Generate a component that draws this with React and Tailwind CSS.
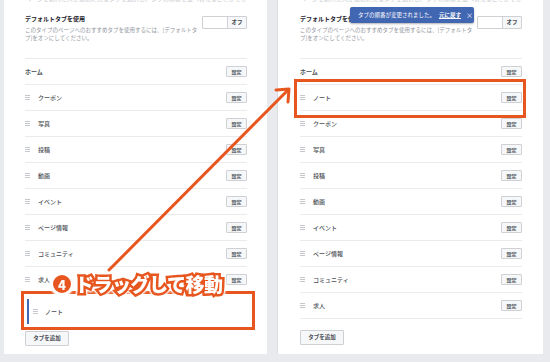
import React from "react";

const TABS = ["クーポン", "写真", "投稿", "動画", "イベント", "ページ情報", "コミュニティ", "求人"];

function Grip() {
  return (
    <div className="flex flex-col gap-[1px] w-[5px] shrink-0">
      <span className="h-[1px] bg-[#c4c7cc]" />
      <span className="h-[1px] bg-[#c4c7cc]" />
      <span className="h-[1px] bg-[#c4c7cc]" />
    </div>
  );
}

function SetButton() {
  return (
    <button className="w-[21px] h-[11px] border border-[#ced0d4] bg-[#f6f7f9] rounded-[1px] text-[5px] font-bold text-[#4b4f56] flex items-center justify-center leading-none">
      設定
    </button>
  );
}

function TabRow({ label }) {
  return (
    <div className="h-[26px] border-b border-[#e9ebee] flex items-center">
      <Grip />
      <span className="ml-[8px] text-[6px] text-[#4b4f56] font-medium">{label}</span>
      <div className="ml-auto">
        <SetButton />
      </div>
    </div>
  );
}

function Header() {
  return (
    <>
      <div className="-mt-[5px] h-[8px] text-[6px] text-[#c9ccd1] leading-[8px] overflow-hidden whitespace-nowrap">
        ページを訪れた人が最初に見るタブを選択し、タブの順番を並べ替えることができます。
      </div>
      <div className="flex justify-between pt-[12px] h-[56px] border-b border-[#e9ebee]">
        <div>
          <div className="text-[6px] leading-[8px] font-bold text-[#1d2129]">デフォルトタブを使用</div>
          <div className="mt-[3px] text-[5.5px] leading-[8px] text-[#90949c] w-[176px]">
            このタイプのページへのおすすめタブを使用するには、[デフォルトタブ]をオンにしてください。
          </div>
        </div>
        <div className="mt-[1px] w-[45px] h-[13px] border border-[#ced0d4] rounded-[1px] flex">
          <div className="w-[24px] bg-white" />
          <div className="flex-1 bg-[#f6f7f9] border-l border-[#ced0d4] flex items-center justify-center text-[5.5px] font-bold text-[#4b4f56]">
            オフ
          </div>
        </div>
      </div>
      <div className="h-[26px] border-b border-[#e9ebee] flex items-center">
        <span className="text-[6px] font-bold text-[#4b4f56]">ホーム</span>
        <div className="ml-auto">
          <SetButton />
        </div>
      </div>
    </>
  );
}

function AddButton() {
  return (
    <button className="w-[44px] h-[15px] border border-[#ced0d4] bg-[#f6f7f9] rounded-[1px] text-[5.5px] font-bold text-[#4b4f56] flex items-center justify-center">
      タブを追加
    </button>
  );
}

export default function App() {
  return (
    <div className="relative w-[550px] h-[362px] overflow-hidden bg-[#e9eaed] flex items-start pl-[4px] gap-[10px] font-['Noto_Sans_CJK_JP',sans-serif]">
      {/* before */}
      <div className="w-[263px] h-[354px] bg-white pl-[21px] pr-[20px]">
        <Header />
        {TABS.map((t) => (
          <TabRow key={t} label={t} />
        ))}
        <div className="relative h-[37px] flex items-center">
          <div className="ml-[2px] h-[25px] border-l-2 border-[#4267b2] flex items-center pl-[4px]">
            <Grip />
            <span className="ml-[7px] text-[6px] text-[#4b4f56] font-medium">ノート</span>
          </div>
          <div className="absolute -left-[4px] -right-[8px] -top-[2px] bottom-0 border-[3px] border-[#e8561f]" />
        </div>
        <div className="mt-[1px]">
          <AddButton />
        </div>
      </div>

      {/* after */}
      <div className="relative w-[266px] h-[354px] bg-white border-l border-[#dadde1] pl-[22px] pr-[21px]">
        <Header />
        <div className="relative">
          <TabRow label="ノート" />
          <div className="absolute -left-[6px] -right-[4px] -top-[6px] -bottom-[7px] border-[3px] border-[#e8561f]" />
        </div>
        {TABS.map((t) => (
          <TabRow key={t} label={t} />
        ))}
        <div className="mt-[11px]">
          <AddButton />
        </div>

        <div className="absolute left-[72px] top-[7px] w-[124px] h-[16px] bg-[#4267b2] rounded-[2px] shadow-[0_1px_2px_rgba(0,0,0,0.3)] flex items-center pl-[8px] text-[5.5px] text-white whitespace-nowrap">
          <span>タブの順番が変更されました。</span>
          <span className="ml-[4px] font-bold underline">元に戻す</span>
          <span className="ml-[5px] text-[7px] leading-none">×</span>
        </div>
      </div>

      {/* annotation arrow */}
      <svg className="absolute inset-0 pointer-events-none" width="550" height="362" viewBox="0 0 550 362">
        <line x1="109" y1="270" x2="288" y2="90" stroke="#e8561f" strokeWidth="3" strokeLinecap="round" />
        <polyline points="276,90 289,89 288,102" fill="none" stroke="#e8561f" strokeWidth="3" strokeLinecap="round" strokeLinejoin="round" />
      </svg>

      <div className="absolute left-[51px] top-[272px] flex items-center [filter:drop-shadow(0_0_1px_white)_drop-shadow(0_0_1px_white)_drop-shadow(0_0_0.5px_white)]">
        <div className="w-[22px] h-[22px] rounded-full bg-[#e8561f] border-[2px] border-white flex items-center justify-center text-white text-[13px] font-black leading-none">
          4
        </div>
        <span className="ml-[2px] text-[19px] leading-[24px] font-black text-white [-webkit-text-stroke:5px_#e8561f] [paint-order:stroke_fill] tracking-[-0.5px]">
          ドラッグして移動
        </span>
      </div>
    </div>
  );
}
